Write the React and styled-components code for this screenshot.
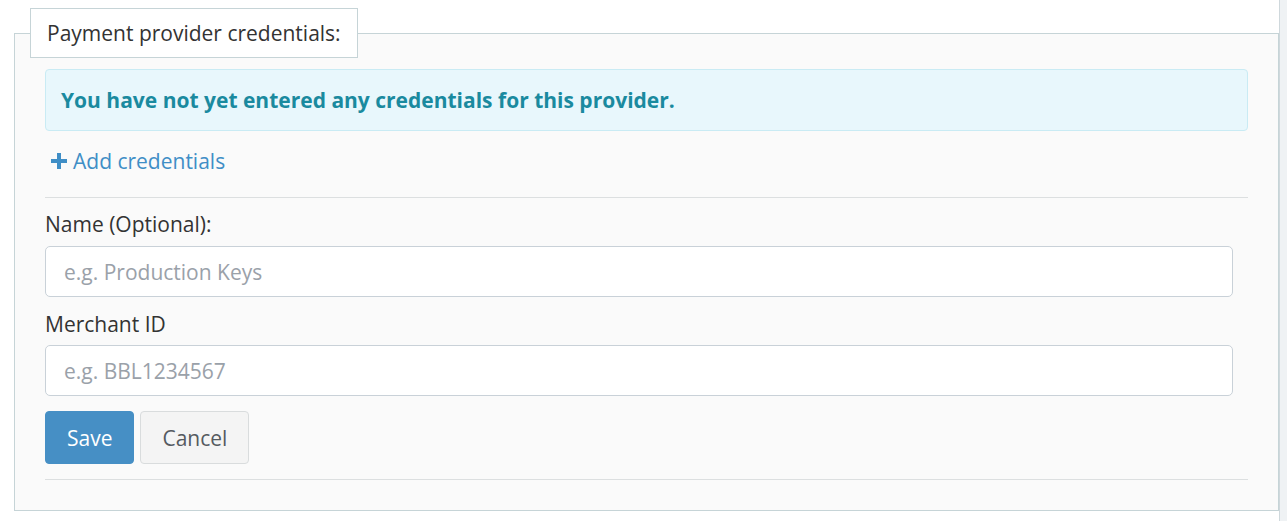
import React from 'react'
import styled, { createGlobalStyle } from 'styled-components'

const GlobalStyle = createGlobalStyle`
  html, body {
    margin: 0;
    padding: 0;
    background: #fff;
    font-family: "Open Sans", "Liberation Sans", sans-serif;
    color: #333;
  }
  * { box-sizing: border-box; }
`

const Page = styled.div`
  display: flex;
  min-height: 521px;
`

const Main = styled.div`
  width: 1279px;
  padding: 8px 0 0 14px;
`

const SideStrip = styled.div`
  flex: 1;
  background: #eff2f4;
  border-left: 1px solid #cfd8dc;
`

const Fieldset = styled.fieldset`
  margin: 0;
  width: 1265px;
  padding: 0 15px 30px 15px;
  border: 1px solid #c6d4d7;
  background: #fafafa;
  min-width: 0;
`

const Legend = styled.legend`
  padding: 9px 16px;
  margin: 0;
  background: #fff;
  border: 1px solid #c6d4d7;
  font-size: 21px;
  line-height: 30px;
  color: #333;
`

const Body = styled.div`
  padding: 11px 15px 0 15px;
`

const Alert = styled.div`
  background: #e8f7fc;
  border: 1px solid #c9ebf4;
  border-radius: 4px;
  padding: 15px 15px;
  font-size: 21px;
  line-height: 30px;
  font-weight: 700;
  color: #1a8a9f;
`

const AddLink = styled.a`
  display: inline-flex;
  align-items: center;
  gap: 6px;
  margin: 15px 0 0 6px;
  font-size: 21px;
  line-height: 30px;
  color: #3f8ec6;
  text-decoration: none;
  cursor: pointer;
`

const Rule = styled.hr`
  margin: ${p => p.$top}px 0 0 0;
  border: 0;
  border-top: 1px solid #dcdfe0;
`

const Field = styled.div`
  margin-top: ${p => p.$top}px;
  padding-right: 15px;
`

const Label = styled.label`
  display: block;
  font-size: 21px;
  line-height: 30px;
  color: #333;
  margin-bottom: ${p => p.$gap}px;
`

const Input = styled.input`
  display: block;
  width: 100%;
  height: 51px;
  padding: 0 18px;
  font-family: inherit;
  font-size: 21px;
  color: #333;
  background: #fff;
  border: 1px solid #c9d1d8;
  border-radius: 5px;
  outline: none;
  &::placeholder {
    color: #9aa1a9;
  }
`

const Actions = styled.div`
  display: flex;
  gap: 6px;
  margin-top: 15px;
`

const Button = styled.button`
  height: 53px;
  padding: 0 ${p => (p.$primary ? 21 : 21)}px;
  font-family: inherit;
  font-size: 21px;
  border-radius: 4px;
  cursor: pointer;
  background: ${p => (p.$primary ? '#468fc5' : '#f4f4f4')};
  color: ${p => (p.$primary ? '#fff' : '#555a60')};
  border: 1px solid ${p => (p.$primary ? '#468fc5' : '#d9dcdd')};
`

const PlusIcon = () => (
  <svg width="16" height="16" viewBox="0 0 16 16">
    <path d="M6 0h4v6h6v4h-6v6H6v-6H0V6h6z" fill="currentColor" />
  </svg>
)

export default function App() {
  return (
    <Page>
      <GlobalStyle />
      <Main>
        <Fieldset>
          <Legend>Payment provider credentials:</Legend>
          <Body>
            <Alert>You have not yet entered any credentials for this provider.</Alert>
            <AddLink>
              <PlusIcon />
              Add credentials
            </AddLink>
            <Rule $top={21} />
            <Field $top={11}>
              <Label $gap={7}>Name (Optional):</Label>
              <Input placeholder="e.g. Production Keys" />
            </Field>
            <Field $top={12}>
              <Label $gap={6}>Merchant ID</Label>
              <Input placeholder="e.g. BBL1234567" />
            </Field>
            <Actions>
              <Button $primary>Save</Button>
              <Button>Cancel</Button>
            </Actions>
            <Rule $top={15} />
          </Body>
        </Fieldset>
      </Main>
      <SideStrip />
    </Page>
  )
}
